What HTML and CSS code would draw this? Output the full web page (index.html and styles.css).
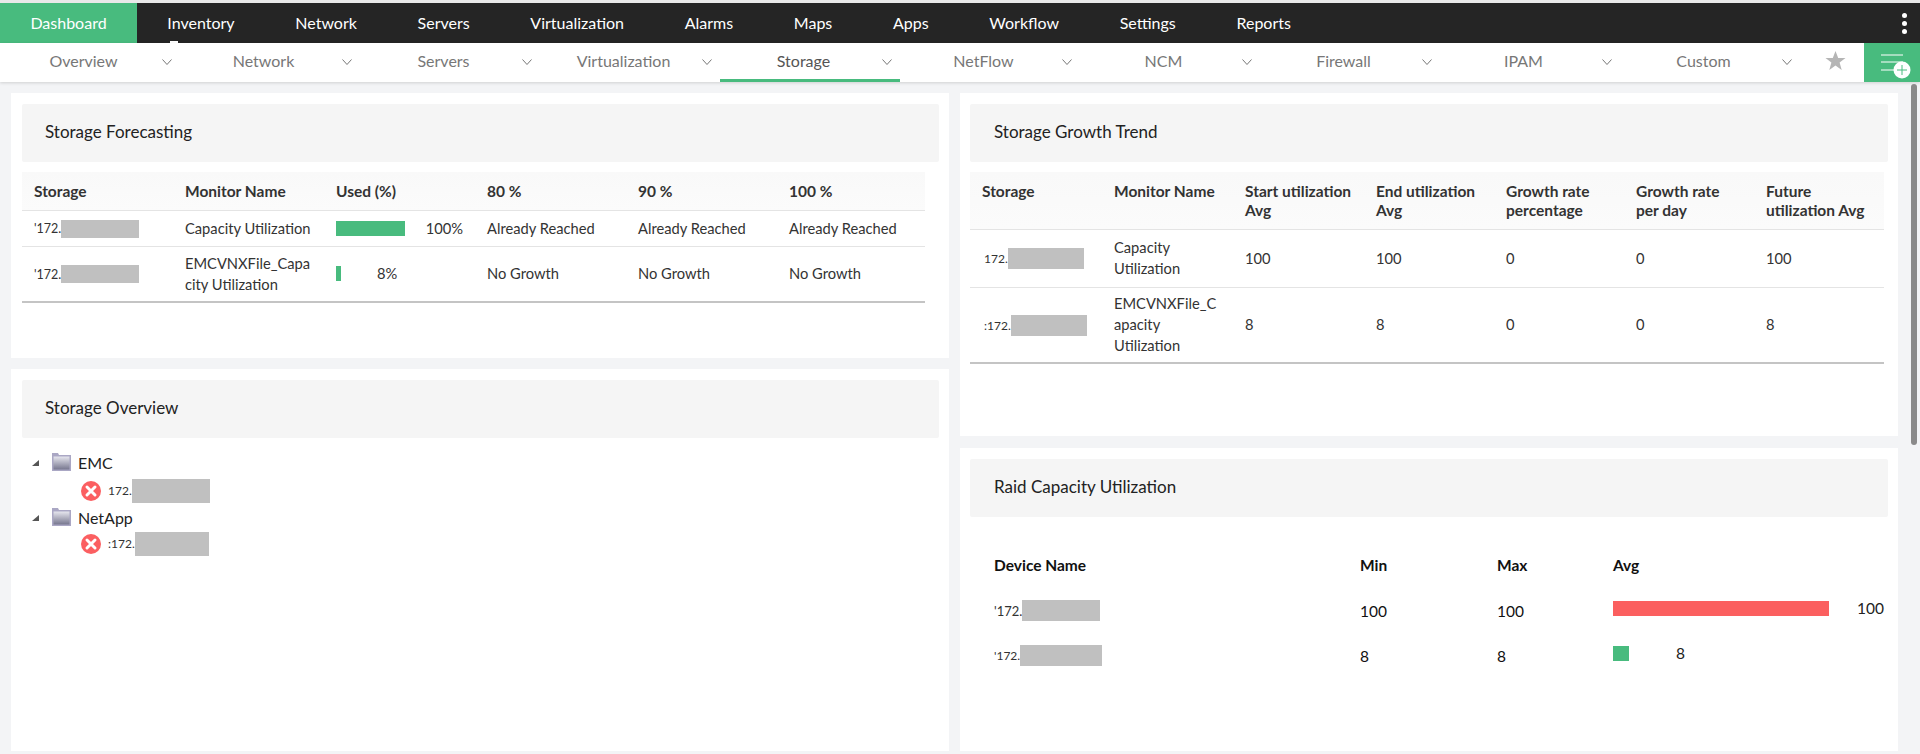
FILE: index.html
```html
<!DOCTYPE html>
<html lang="en">
<head>
<meta charset="utf-8">
<title>Storage Dashboard</title>
<link rel="stylesheet" href="styles.css">
</head>
<body>
<svg class="defs" width="0" height="0" aria-hidden="true">
  <defs>
    <linearGradient id="fold" x1="0" y1="0" x2="0" y2="1">
      <stop offset="0" stop-color="#e6e6ee"/>
      <stop offset="1" stop-color="#77778f"/>
    </linearGradient>
    <symbol id="chev" viewBox="0 0 10 6"><path d="M.5.5 5 5.500 9.500.5" fill="none" stroke="#777" stroke-width="1"/></symbol>
    <symbol id="folder" viewBox="0 0 19 18"><path d="M0 18V0h6l1 2h12v16z" fill="#aaa7c4"/><rect x="1.500" y="3.500" width="16" height="13" fill="url(#fold)"/></symbol>
    <symbol id="err" viewBox="0 0 20 20"><circle cx="10" cy="10" r="10" fill="#fb5f61"/><path d="M6 6l8 8M14 6l-8 8" stroke="#fff" stroke-width="3" stroke-linecap="round"/></symbol>
    <symbol id="tri" viewBox="0 0 7 6"><path d="M7 0v6H0z" fill="#555"/></symbol>
  </defs>
</svg>

<nav class="topnav">
  <a class="top-item active">Dashboard</a>
  <a class="top-item marked">Inventory</a>
  <a class="top-item">Network</a>
  <a class="top-item">Servers</a>
  <a class="top-item">Virtualization</a>
  <a class="top-item">Alarms</a>
  <a class="top-item">Maps</a>
  <a class="top-item">Apps</a>
  <a class="top-item">Workflow</a>
  <a class="top-item">Settings</a>
  <a class="top-item">Reports</a>
  <span class="dots"><i></i><i></i><i></i></span>
</nav>

<nav class="subnav">
  <a class="tab"><span class="tab-label">Overview</span><svg class="chev"><use href="#chev"/></svg></a>
  <a class="tab"><span class="tab-label">Network</span><svg class="chev"><use href="#chev"/></svg></a>
  <a class="tab"><span class="tab-label">Servers</span><svg class="chev"><use href="#chev"/></svg></a>
  <a class="tab"><span class="tab-label">Virtualization</span><svg class="chev"><use href="#chev"/></svg></a>
  <a class="tab current"><span class="tab-label">Storage</span><svg class="chev"><use href="#chev"/></svg></a>
  <a class="tab"><span class="tab-label">NetFlow</span><svg class="chev"><use href="#chev"/></svg></a>
  <a class="tab"><span class="tab-label">NCM</span><svg class="chev"><use href="#chev"/></svg></a>
  <a class="tab"><span class="tab-label">Firewall</span><svg class="chev"><use href="#chev"/></svg></a>
  <a class="tab"><span class="tab-label">IPAM</span><svg class="chev"><use href="#chev"/></svg></a>
  <a class="tab"><span class="tab-label">Custom</span><svg class="chev"><use href="#chev"/></svg></a>
  <svg class="star" viewBox="0 0 20 20"><path d="M10 0l2.700 7H20l-5.900 4.500L16.200 19 10 14.600 3.800 19l2.100-7.500L0 7h7.300z" fill="#b5b5b5"/></svg>
  <span class="addmenu">
    <svg width="56" height="39" viewBox="0 0 56 39">
      <path d="M17 12h22M17 19h22M17 27h22" stroke="#fff" stroke-width="1"/>
      <circle cx="38" cy="27" r="8.500" fill="#fff"/>
      <path d="M38 22v10M33 27h10" stroke="#48bb7e" stroke-width="1"/>
    </svg>
  </span>
</nav>

<div class="page">
  <main class="columns">
    <div class="col">
      <section class="card forecast">
        <h2 class="card-title">Storage Forecasting</h2>
        <table class="data fc-table">
          <colgroup><col class="c151"><col class="c151"><col class="c151"><col class="c151"><col class="c151"><col class="c148"></colgroup>
          <thead>
            <tr><th>Storage</th><th>Monitor Name</th><th>Used (%)</th><th>80 %</th><th>90 %</th><th>100 %</th></tr>
          </thead>
          <tbody>
            <tr class="row-a">
              <td><span class="ip">'172.<b class="mask m78"></b></span></td>
              <td>Capacity Utilization</td>
              <td><span class="meter"><i class="fill green" style="width:71px"></i><span class="val">100%</span></span></td>
              <td>Already Reached</td><td>Already Reached</td><td>Already Reached</td>
            </tr>
            <tr class="row-b">
              <td><span class="ip">'172.<b class="mask m78"></b></span></td>
              <td>EMCVNXFile_Capa<br>city Utilization</td>
              <td><span class="meter"><i class="fill green" style="width:5px"></i><span class="val narrow">8%</span></span></td>
              <td>No Growth</td><td>No Growth</td><td>No Growth</td>
            </tr>
          </tbody>
        </table>
      </section>

      <section class="card overview">
        <h2 class="card-title">Storage Overview</h2>
        <ul class="tree">
          <li class="group"><svg class="tri"><use href="#tri"/></svg><svg class="folder"><use href="#folder"/></svg><span>EMC</span></li>
          <li class="leaf first"><svg class="err"><use href="#err"/></svg><span class="ip">172.<b class="mask m78 tall"></b></span></li>
          <li class="group"><svg class="tri"><use href="#tri"/></svg><svg class="folder"><use href="#folder"/></svg><span>NetApp</span></li>
          <li class="leaf"><svg class="err"><use href="#err"/></svg><span class="ip">:172.<b class="mask m74 tall"></b></span></li>
        </ul>
      </section>
    </div>

    <div class="col">
      <section class="card growth">
        <h2 class="card-title">Storage Growth Trend</h2>
        <table class="data gr-table">
          <colgroup><col class="c132"><col class="c131"><col class="c131"><col class="c130"><col class="c130"><col class="c130"><col class="c130"></colgroup>
          <thead>
            <tr><th>Storage</th><th>Monitor Name</th><th>Start utilization Avg</th><th>End utilization Avg</th><th>Growth rate percentage</th><th>Growth rate per day</th><th>Future utilization Avg</th></tr>
          </thead>
          <tbody>
            <tr class="row-c">
              <td class="ipcell"><span class="ip">172.<b class="mask m76"></b></span></td>
              <td>Capacity<br>Utilization</td><td>100</td><td>100</td><td>0</td><td>0</td><td>100</td>
            </tr>
            <tr class="row-d">
              <td class="ipcell"><span class="ip">:172.<b class="mask m76"></b></span></td>
              <td>EMCVNXFile_C<br>apacity<br>Utilization</td><td>8</td><td>8</td><td>0</td><td>0</td><td>8</td>
            </tr>
          </tbody>
        </table>
      </section>

      <section class="card raid">
        <h2 class="card-title">Raid Capacity Utilization</h2>
        <table class="raid-table">
          <thead>
            <tr><th>Device Name</th><th>Min</th><th>Max</th><th>Avg</th></tr>
          </thead>
          <tbody>
            <tr>
              <td><span class="ip wide">'172.<b class="mask m78 raidmask"></b></span></td>
              <td>100</td><td>100</td>
              <td><span class="meter"><i class="fill red" style="width:216px"></i><span class="val rv">100</span></span></td>
            </tr>
            <tr>
              <td><span class="ip">'172.<b class="mask m82 raidmask"></b></span></td>
              <td>8</td><td>8</td>
              <td><span class="meter"><i class="fill green" style="width:16px"></i><span class="val rv far">8</span></span></td>
            </tr>
          </tbody>
        </table>
      </section>
    </div>
  </main>
  <div class="scrollbar"><i class="thumb"></i></div>
</div>
</body>
</html>
```

FILE: styles.css
```css
* { box-sizing: border-box; }
html, body { margin: 0; height: 100%; overflow: hidden; }
body {
  font-family: Lato, "Liberation Sans", sans-serif;
  background: #f3f4f6;
  color: #333;
  font-size: 14.700px;
  border-top: 3px solid #e9e9e9;
}
.defs { position: absolute; }

/* top navigation */
.topnav {
  height: 40px;
  background: #252525;
  display: flex;
  align-items: stretch;
}
.top-item {
  color: #fff;
  font-size: 16px;
  line-height: 40px;
  padding: 0 30.350px;
  position: relative;
}
.top-item.active {
  background: #48bb7e;
  width: 137px;
  padding: 0;
  text-align: center;
}
.top-item.marked::after {
  content: "";
  position: absolute;
  left: 33px;
  bottom: 0;
  width: 8px;
  height: 2px;
  background: #fff;
}
.dots {
  margin-left: auto;
  width: 32px;
  display: flex;
  flex-direction: column;
  justify-content: center;
  align-items: center;
  gap: 3px;
}
.dots i {
  width: 5px;
  height: 5px;
  border-radius: 50%;
  background: #fff;
}

/* secondary navigation */
.subnav {
  height: 39px;
  background: #fff;
  display: flex;
  align-items: stretch;
  box-shadow: 0 1px 3px rgba(0,0,0,.15);
  position: relative;
}
.tab {
  width: 180px;
  padding-left: 5.500px;
  display: flex;
  align-items: center;
  color: #777;
  font-size: 16px;
  border-bottom: 3px solid transparent;
}
.tab.current { border-bottom-color: #48bb7e; color: #555; }
.tab-label { width: 156px; text-align: center; margin-top: -2px; }
.chev { width: 10px; height: 6px; margin-top: 2px; }
.star { width: 21px; height: 20px; margin: 8px 0 0 25px; }
.addmenu { margin-left: auto; width: 56px; background: #48bb7e; }
.addmenu svg { display: block; }

/* page */
.page { display: flex; height: 672px; padding: 11px 0 0 11px; }
.columns {
  width: 1887px;
  display: grid;
  grid-template-columns: 938px 938px;
  gap: 11px;
}
.col { display: flex; flex-direction: column; gap: 11px; }
.card { background: #fff; padding: 11px 10px 11px 11px; }
.forecast { height: 265px; }
.overview { height: 382px; }
.growth { height: 343px; padding-left: 10px; }
.raid { height: 303px; margin-top: 1px; padding-left: 10px; }
.card-title {
  margin: 0;
  height: 58px;
  background: #f5f5f5;
  border-radius: 2px;
  font-size: 17px;
  font-weight: 400;
  line-height: 56px;
  padding-left: 23px;
  color: #222;
}
.growth .card-title, .raid .card-title { padding-left: 24px; }
.scrollbar { flex: 1; position: relative; }
.thumb {
  position: absolute;
  left: 13px;
  top: -9px;
  width: 6px;
  height: 361px;
  border-radius: 3px;
  background: #8a8a8a;
}

/* data tables */
.data {
  border-collapse: collapse;
  table-layout: fixed;
  margin-top: 10px;
  border-bottom: 2px solid #c4c4c4;
  line-height: 21px;
}
.fc-table { width: 903px; }
.gr-table { width: 914px; }
.c151 { width: 151px; }
.c148 { width: 148px; }
.c132 { width: 132px; }
.c131 { width: 131px; }
.c130 { width: 130px; }
.data th {
  background: linear-gradient(#f9f9f9, #fbfbfb);
  text-align: left;
  vertical-align: top;
  font-weight: 700;
  color: #333;
  font-size: 15.500px;
  line-height: 19px;
  padding: 10px 12px 0;
  border-bottom: 1px solid #e4e4e4;
}
.data td {
  padding: 0 12px;
  color: #333;
  vertical-align: middle;
  font-size: 14.700px;
}
.fc-table th { height: 38px; }
.gr-table th { height: 57px; }
.row-a td { height: 36px; border-bottom: 1px solid #e4e4e4; }
.row-b td { height: 56px; }
.row-c td { height: 58px; border-bottom: 1px solid #e4e4e4; }
.row-d td { height: 76px; }

.ip { display: inline-flex; align-items: center; font-size: 12px; color: #333; }
.fc-table .ip { font-size: 12.500px; }
.ip.wide { font-size: 13px; }
.mask { display: block; height: 18px; background: #c0c0c0; }
.m78 { width: 78px; }
.m74 { width: 74px; }
.m76 { width: 76px; }
.m82 { width: 82px; }
.tall { height: 24px; }
.raidmask { height: 21px; }
.ipcell { padding-left: 14px !important; }
.ipcell .mask { height: 21px; }

.meter { display: flex; align-items: center; }
.fill { display: block; height: 15px; }
.green { background: #48bb7e; }
.red { background: #fb5f5f; }
.val { margin-left: 21px; }
.val.narrow { margin-left: 36px; }
.rv { color: #222; }

/* tree */
.tree { list-style: none; margin: 12px 0 0; padding: 0 0 0 10px; color: #222; }
.group { display: flex; align-items: center; height: 24px; font-size: 16px; }
.leaf { display: flex; align-items: center; height: 29px; padding-left: 49px; }
.leaf.first { margin-top: 2px; }
.tri { width: 7px; height: 6px; margin-top: 2px; }
.folder { width: 19px; height: 18px; margin: 0 7px 0 13px; }
.err { width: 20px; height: 20px; margin-right: 7px; }

/* raid table */
.raid-table {
  border-collapse: collapse;
  table-layout: fixed;
  margin: 25px 0 0 24px;
  width: 890px;
  color: #111;
  font-size: 15.500px;
}
.raid-table th { text-align: left; font-weight: 700; font-size: 15.500px; height: 46px; padding: 0; }
.raid-table td { height: 45px; padding: 0; }
.raid-table th:nth-child(1) { width: 366px; }
.raid-table th:nth-child(2) { width: 137px; }
.raid-table th:nth-child(3) { width: 116px; }
.raid-table .meter { margin-bottom: 5px; }
.raid-table .rv { margin-left: 28px; }
.raid-table .rv.far { margin-left: 47px; }
```
